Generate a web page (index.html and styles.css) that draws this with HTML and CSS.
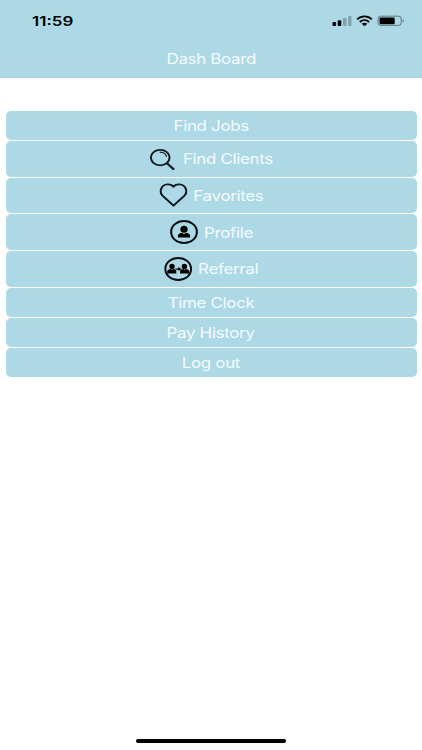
FILE: index.html
```html
<!DOCTYPE html>
<html lang="en">
<head>
    <meta charset="UTF-8">
    <meta name="viewport" content="width=device-width, initial-scale=1.0">
    <title>Dash Board</title>
    <link rel="stylesheet" href="styles.css">
</head>
<body>
<header class="header">
    <div class="status-bar">
        <span class="time">11:59</span>
        <svg class="status-icons" width="72" height="12" viewBox="0 0 72 12">
            <rect x="0.5" y="7" width="3.6" height="4" rx="1"/>
            <rect x="5.7" y="5.2" width="3.6" height="5.8" rx="1"/>
            <rect x="11" y="3" width="3.6" height="8" rx="1" opacity="0.25"/>
            <rect x="16.1" y="1" width="3.4" height="10" rx="1" opacity="0.25"/>
            <g fill="none" stroke="#000" stroke-width="1.8">
                <path d="M25.2 4.3C29.3 0.4 35.7 0.4 39.8 4.3"/>
                <path d="M27.8 7C30.6 4.5 34.4 4.5 37.2 7"/>
            </g>
            <path d="M29.7 8.8C31.3 7.5 33.7 7.5 35.3 8.8L32.5 11.2Z"/>
            <rect x="46" y="1.2" width="23.2" height="9.2" rx="2.6" fill="none" stroke="#000" opacity="0.45"/>
            <rect x="47.5" y="2.6" width="15.2" height="6.6" rx="1.2"/>
            <path d="M70.6 4.2C72.2 4.8 72.2 6.9 70.6 7.5Z" opacity="0.5"/>
        </svg>
    </div>
    <h1 class="title">Dash Board</h1>
</header>

<main class="menu">
    <button class="item"><span class="label">Find Jobs</span></button>
    <button class="item tall">
        <span class="label">
            <svg class="icon" viewBox="0 0 24 24">
                <g fill="none" stroke="#111a1e" stroke-linecap="round">
                    <ellipse cx="9.6" cy="10.6" rx="8" ry="7.7" stroke-width="1.7"/>
                    <path d="M15.5 16.4L20.8 22" stroke-width="2.1"/>
                    <path d="M9.4 5.3C12.2 5.2 14.3 6.8 15 9.6" stroke-width="0.9"/>
                </g>
            </svg>
            Find Clients
        </span>
    </button>
    <button class="item tall">
        <span class="label">
            <svg class="icon" viewBox="0 0 24 24">
                <path d="M12 22.6L2.6 12.6C-0.6 8.8 1.4 1.8 6.8 1.4C9.2 1.2 11 2.2 12 3.8C13 2.2 14.8 1.2 17.2 1.4C22.6 1.8 24.6 8.8 21.4 12.6Z" fill="none" stroke="#111a1e" stroke-width="1.8" stroke-linejoin="round"/>
            </svg>
            Favorites
        </span>
    </button>
    <button class="item tall">
        <span class="label">
            <svg class="icon" viewBox="0 0 24 24">
                <circle cx="12" cy="12" r="11" fill="none" stroke="#0b1114" stroke-width="1.8"/>
                <ellipse cx="12" cy="9.3" rx="3.1" ry="3.5"/>
                <path d="M6.8 17.4V15.6C6.8 13.6 9 13 10.4 12.7L12 14.2L13.6 12.7C15 13 17.2 13.6 17.2 15.6V17.4Z"/>
            </svg>
            Profile
        </span>
    </button>
    <button class="item tall">
        <span class="label">
            <svg class="icon" viewBox="0 0 24 24">
                <circle cx="12" cy="12" r="11" fill="none" stroke="#0b1114" stroke-width="1.8"/>
                <ellipse cx="6.7" cy="9.4" rx="2.3" ry="2.6"/>
                <path d="M2.6 16.5V14.6C2.6 13 4.3 12.3 5.5 12.1L6.7 12.8L7.9 12.1C9.1 12.3 10.4 13 10.4 14.6V16.5Z"/>
                <ellipse cx="17.3" cy="9.4" rx="2.3" ry="2.6"/>
                <path d="M13.6 16.5V14.6C13.6 13 14.9 12.3 16.1 12.1L17.3 12.8L18.5 12.1C19.7 12.3 21.4 13 21.4 14.6V16.5Z"/>
                <path d="M9.6 11.4H12.2V10L14.8 12L12.2 14V12.7H9.6Z"/>
            </svg>
            Referral
        </span>
    </button>
    <button class="item"><span class="label">Time Clock</span></button>
    <button class="item"><span class="label">Pay History</span></button>
    <button class="item"><span class="label">Log out</span></button>
</main>

<div class="home-indicator"></div>
</body>
</html>
```
FILE: styles.css
```css
* {
    box-sizing: border-box;
}
body {
    display: flex;
    flex-direction: column;
    height: 100vh;
    margin: 0;
    font-family: Inter, "Liberation Sans", sans-serif;
    background: white;
    overflow: hidden;
}
.header {
    height: 78px;
    background: #add8e6;
    border-bottom: 1px solid #a9d1de;
}
.status-bar {
    display: flex;
    justify-content: space-between;
    align-items: center;
    height: 41px;
    padding: 0 18px 0 32px;
}
.time {
    font-size: 13.5px;
    font-weight: 600;
    transform: scaleX(1.26);
    transform-origin: left;
}
.title {
    width: fit-content;
    margin: 9px auto 0;
    font-size: 14.5px;
    line-height: 18px;
    font-weight: 400;
    letter-spacing: -0.3px;
    color: #f4fbfd;
    transform: scaleX(1.17);
}
.menu {
    display: flex;
    flex-direction: column;
    gap: 1px;
    padding: 32.8px 5.5px 0;
}
.item {
    display: flex;
    justify-content: center;
    align-items: center;
    height: 29.1px;
    padding: 0;
    border: none;
    border-radius: 5px;
    background: #add8e6;
    color: #f4fbfd;
    font-family: inherit;
    font-size: 14.5px;
    letter-spacing: -0.3px;
}
.tall {
    height: 35.7px;
}
/* wide lettering, icons stretch with it */
.label {
    display: flex;
    align-items: center;
    gap: 5px;
    transform: scaleX(1.17);
}
.icon {
    width: 24px;
    height: 24px;
}
.home-indicator {
    width: 150px;
    height: 4px;
    margin: auto auto 7px;
    border-radius: 2px;
    background: #000;
}
```
